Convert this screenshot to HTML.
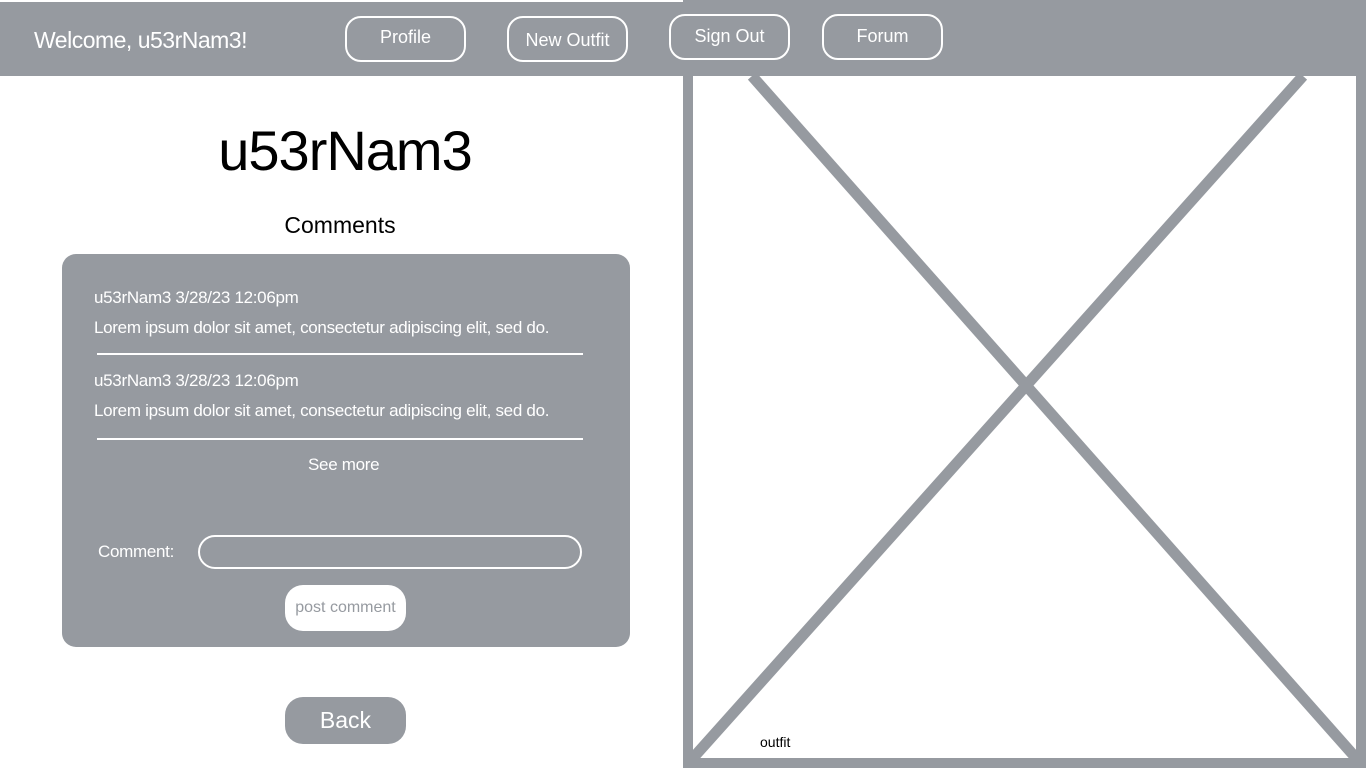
<!DOCTYPE html>
<html><head><style>
*{margin:0;padding:0;box-sizing:border-box}
body{width:1366px;height:768px;position:relative;background:#fff;font-family:"Liberation Sans",sans-serif;overflow:hidden}
.hdr{position:absolute;left:0;top:2px;width:683px;height:74px;background:#969aa0}
.w{position:absolute;left:34px;top:27px;color:#fff;font-size:23px;letter-spacing:-0.5px}
.b{position:absolute;height:46px;width:121px;border:2.5px solid #fff;border-radius:16px;color:#fff;font-size:18px;text-align:center;line-height:40px}
.box{position:absolute;left:62px;top:254px;width:568px;height:393px;background:#969aa0;border-radius:14px}
.t{position:absolute;color:#fff;font-size:17px;letter-spacing:-0.3px}
.hr{position:absolute;left:97px;width:486px;height:2px;background:#fff}
</style></head><body>
<svg style="position:absolute;left:683px;top:0" width="683" height="768">
<rect x="5" y="5" width="673" height="758" fill="none" stroke="#969aa0" stroke-width="10"/>
<rect x="0" y="0" width="683" height="76" fill="#969aa0"/>
<line x1="69" y1="76" x2="673" y2="758" stroke="#969aa0" stroke-width="11"/>
<line x1="620" y1="76" x2="10" y2="758" stroke="#969aa0" stroke-width="11"/>
<text x="77" y="747" font-family="Liberation Sans" font-size="14" fill="#000">outfit</text>
</svg>
<div class="hdr"></div>
<div class="w">Welcome, u53rNam3!</div>
<div class="b" style="left:345px;top:16px;line-height:38px">Profile</div>
<div class="b" style="left:507px;top:16px;line-height:44px">New Outfit</div>
<div class="b" style="left:669px;top:14px">Sign Out</div>
<div class="b" style="left:822px;top:14px">Forum</div>
<div style="position:absolute;left:0;width:690px;top:118px;text-align:center;font-size:56px;color:#000;letter-spacing:-1px">u53rNam3</div>
<div style="position:absolute;left:0;width:680px;top:212px;text-align:center;font-size:23px;color:#000">Comments</div>
<div class="box"></div>
<div class="t" style="left:94px;top:288px">u53rNam3 3/28/23 12:06pm</div>
<div class="t" style="left:94px;top:318px">Lorem ipsum dolor sit amet, consectetur adipiscing elit, sed do.</div>
<div class="hr" style="top:353px"></div>
<div class="t" style="left:94px;top:371px">u53rNam3 3/28/23 12:06pm</div>
<div class="t" style="left:94px;top:401px">Lorem ipsum dolor sit amet, consectetur adipiscing elit, sed do.</div>
<div class="hr" style="top:438px"></div>
<div class="t" style="left:308px;top:455px">See more</div>
<div class="t" style="left:98px;top:542px">Comment:</div>
<div style="position:absolute;left:198px;top:535px;width:384px;height:34px;border:2px solid #fff;border-radius:17px"></div>
<div style="position:absolute;left:285px;top:585px;width:121px;height:46px;background:#fff;border-radius:18px;color:#969aa0;font-size:16px;text-align:center;line-height:46px">post comment</div>
<div style="position:absolute;left:285px;top:697px;width:121px;height:47px;background:#969aa0;border-radius:18px;color:#fff;font-size:23px;text-align:center;line-height:47px">Back</div>
</body></html>
